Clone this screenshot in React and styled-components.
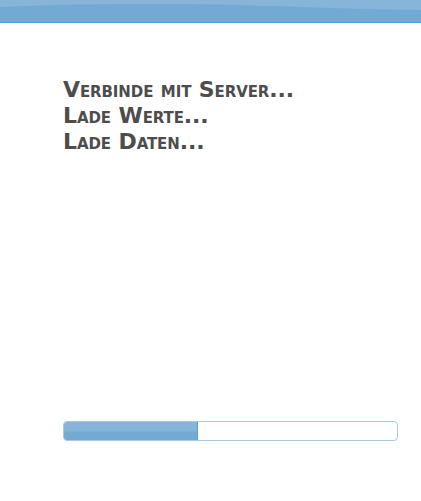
import styled, { createGlobalStyle } from "styled-components";

const GlobalStyle = createGlobalStyle`
  html, body {
    margin: 0;
    padding: 0;
    background: #ffffff;
  }
`;

const Page = styled.div`
  width: 421px;
  height: 501px;
  display: flex;
  flex-direction: column;
  font-family: "DejaVu Sans", Verdana, sans-serif;
`;

const Header = styled.div`
  height: 22px;
  border-bottom: 1px solid #4b9bd9;
  background: #72aad3;
  position: relative;
  overflow: hidden;
`;

const Wave = styled.svg`
  position: absolute;
  inset: 0;
  width: 100%;
  height: 100%;
`;

const Content = styled.div`
  flex: 1;
  display: flex;
  flex-direction: column;
  justify-content: space-between;
  padding: 54px 24px 60px 63px;
`;

const Messages = styled.div`
  display: flex;
  flex-direction: column;
`;

const Line = styled.div`
  color: #4d4d4d;
  font-weight: bold;
  font-size: 22px;
  line-height: 26px;
  font-variant: small-caps;
  letter-spacing: -0.1px;
  white-space: nowrap;
`;

const Track = styled.div`
  height: 18px;
  width: 333px;
  border: 1px solid #a3c9e6;
  border-radius: 4px;
  background: #ffffff;
  overflow: hidden;
  display: flex;
`;

const Fill = styled.div`
  height: 100%;
  background: linear-gradient(to bottom, #87b5da 0%, #87b5da 45%, #72aad3 60%, #72aad3 100%);
  border-right: 1px solid #5a9fd2;
`;

export default function App() {
  const progress = 0.4;
  return (
    <>
      <GlobalStyle />
      <Page>
        <Header>
          <Wave viewBox="0 0 421 22" preserveAspectRatio="none">
            <path
              d="M0 0 H421 V10 C330 9 260 4 160 4 C90 4 40 5 0 7 Z"
              fill="#87b5da"
            />
          </Wave>
        </Header>
        <Content>
          <Messages>
            <Line>Verbinde mit Server...</Line>
            <Line>Lade Werte...</Line>
            <Line>Lade Daten...</Line>
          </Messages>
          <Track>
            <Fill style={{ width: `${progress * 100}%` }} />
          </Track>
        </Content>
      </Page>
    </>
  );
}
